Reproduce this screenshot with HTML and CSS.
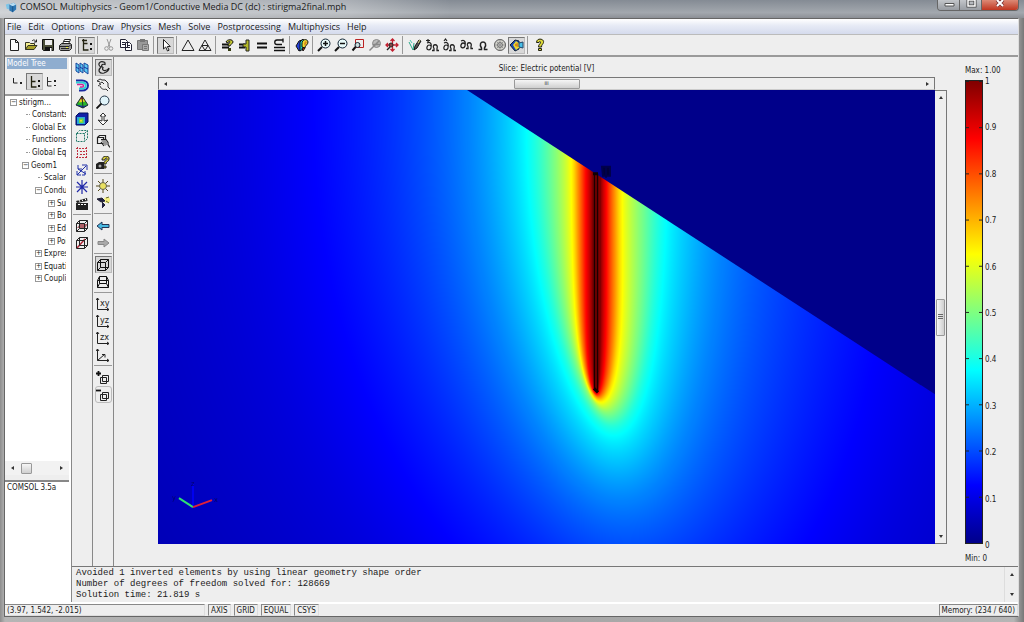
FILE: index.html
```html
<!DOCTYPE html>
<html lang="en">
<head>
  <meta charset="UTF-8">
  <meta name="viewport" content="width=device-width,initial-scale=1.0">
  <title>COMSOL Multiphysics</title>
  <link rel="stylesheet" href="styles.css">
</head>
<body>

<div class="window">
  <header class="titlebar">
    <svg class="app-icon" viewBox="0 0 14 14"><path d="M1 4l4-1v7l-3-1z" fill="#7cc4e8"/><path d="M5 4l5-2 3 2v6l-4 3-4-2z" fill="#2f78b4"/><path d="M5 4l4 2 4-2-3-2z" fill="#b6dcf2"/><path d="M9 6v7" stroke="#164f86"/></svg>
    <span class="title">COMSOL Multiphysics - Geom1/Conductive Media DC (dc) : stirigma2final.mph</span>
    <div class="window-buttons">
      <button aria-label="Minimize"><svg viewBox="0 0 20 10"><path d="M6 3.500h9v2.500H6z" fill="#fff" stroke="#555"/></svg></button>
      <button aria-label="Maximize"><svg viewBox="0 0 20 10"><path d="M7 0h7v6H7z" fill="none" stroke="#444" stroke-width="3"/><path d="M7 0h7v6H7z" fill="none" stroke="#fff" stroke-width="1.500"/></svg></button>
      <button class="close" aria-label="Close"><svg viewBox="0 0 20 10"><path d="M7 0l6 6M13 0L7 6" stroke="#733" stroke-width="3.500"/><path d="M7 0l6 6M13 0L7 6" stroke="#fff" stroke-width="2"/></svg></button>
    </div>
  </header>

  <div class="client">
    <nav class="menubar">
      <button>File</button><button>Edit</button><button>Options</button><button>Draw</button><button>Physics</button><button>Mesh</button><button>Solve</button><button>Postprocessing</button><button>Multiphysics</button><button>Help</button>
    </nav>

    <div class="toolbar">
      <button aria-label="New"><svg viewBox="0 0 14 14"><path d="M3.500 1.500h5l3 3v8h-8zM8.500 1.500v3h3" fill="#fff" stroke="#222"/></svg></button>
      <button aria-label="Open"><svg viewBox="0 0 14 14"><path d="M1.500 11.500v-7h4l1 1h4v2" fill="#f4ee90" stroke="#332"/><path d="M1.500 11.500l2.500-4h9l-3 4z" fill="#a7a028" stroke="#332"/><path d="M8 3c2-2 3-1 4 1M12.500 1.500V4H10" fill="none" stroke="#222"/></svg></button>
      <button aria-label="Save"><svg viewBox="0 0 14 14"><path d="M1.500 1.500h11v11h-10l-1-1z" fill="#4c5038" stroke="#111"/><path d="M4 2h7v5H4z" fill="#eee"/><path d="M4 9h7v4H4z" fill="#111"/><path d="M9 10h1.500v3H9z" fill="#fff"/></svg></button>
      <button aria-label="Print"><svg viewBox="0 0 14 14"><path d="M4.500 6l2-4.500h6L10.500 6" fill="#fff" stroke="#222"/><path d="M1.500 7.500l2-2h9l1 1v4l-2 2h-9l-1-1z" fill="#999" stroke="#222"/><path d="M2 8.500h9l2-2M3 10.500h8M6 3.500h5" fill="none" stroke="#222"/><path d="M8 9h2v1H8z" fill="#ee3"/></svg></button>
      <i class="sep"></i>
      <button class="pressed" aria-label="Model Tree"><svg viewBox="0 0 14 14"><path d="M3.500 1v11h5M3.500 5.500h4M2 2.500h5" fill="none" stroke="#221" stroke-width="1.300"/><path d="M10 5h2v2h-2zM10 10h2v2h-2z" fill="#111"/></svg></button>
      <i class="sep"></i>
      <button aria-label="Cut"><svg viewBox="0 0 14 14"><path d="M5 1l3 8M9 1L6 9" stroke="#999" fill="none"/><circle cx="4.500" cy="10.500" r="1.800" fill="none" stroke="#999"/><circle cx="9" cy="10.500" r="1.800" fill="none" stroke="#999"/></svg></button>
      <button aria-label="Copy"><svg viewBox="0 0 14 14"><path d="M1.500 1.500h5l2 2v6h-7zM6.500 4.500h4l2 2v6h-6z" fill="#fff" stroke="#223"/><path d="M3 4.500h3M3 6.500h3M8 7.500h3M8 9.500h3" stroke="#223"/></svg></button>
      <button aria-label="Paste"><svg viewBox="0 0 14 14"><path d="M1.500 2.500h10v9h-10z" fill="#999" stroke="#777"/><path d="M4 1h5v3H4z" fill="#777"/><path d="M6.500 6.500h6v6h-6z" fill="#aaa" stroke="#777"/><path d="M8 8.500h3M8 10.500h3" stroke="#777"/></svg></button>
      <i class="sep wide"></i>
      <button class="pressed" aria-label="Select"><svg viewBox="0 0 14 14"><path d="M4.500 1.500v9.500l2.200-2 1.800 4 1.600-.8-1.800-3.700h3z" fill="#fff" stroke="#222"/></svg></button>
      <i class="sep"></i>
      <button aria-label="Initialize Mesh"><svg viewBox="0 0 14 14"><path d="M7 2l6 10.500H1z" fill="none" stroke="#222"/></svg></button>
      <button aria-label="Refine Mesh"><svg viewBox="0 0 14 14"><path d="M7 2l6 10.500H1zM4 7.500h6l-3 5z" fill="none" stroke="#222"/></svg></button>
      <i class="sep wide"></i>
      <button aria-label="Get Initial Value"><svg viewBox="0 0 14 14"><path d="M1 6.500h7M1 9.500h7" stroke="#111" stroke-width="1.800"/><path d="M5 4c1-3 7-3 7 0 0 2-3 2-3 4H7c0-3 2-3 2-4S7 3 7 5z" fill="#c9cc32" stroke="#111"/><path d="M7 10h3v3H7z" fill="#333a10"/></svg></button>
      <button aria-label="Solver Parameters"><svg viewBox="0 0 14 14"><path d="M1 6.500h6M1 9.500h6" stroke="#111" stroke-width="1.800"/><path d="M8 2h3v11H8V9H5V6h3z" fill="#b6ba28" stroke="#222"/></svg></button>
      <button aria-label="Solve"><svg viewBox="0 0 14 14"><path d="M2 5.500h10M2 9.500h10" stroke="#111" stroke-width="2"/></svg></button>
      <button aria-label="Restart"><svg viewBox="0 0 14 14"><path d="M2 9.500h11M2 12.500h11" stroke="#111" stroke-width="1.300"/><path d="M11 2H5C2 2 2 6.500 5 6.500h5M11 4.500V.500" fill="none" stroke="#111" stroke-width="1.300"/></svg></button>
      <i class="sep wide"></i>
      <button aria-label="Plot Parameters"><svg viewBox="0 0 14 14"><path d="M1 8l3-5 3-1-1 10-2 1z" fill="#2440d8" stroke="#111"/><path d="M5 4l3-3 2 3-2 7-3 2z" fill="#28d8c8" stroke="#111"/><path d="M7 6c0-6 6-5 6-2s-3 3-3 6l-3-1z" fill="#ece030" stroke="#111"/><path d="M10 3l2 1-2 4-1-2z" fill="#d88820"/><path d="M7 10h3l-2 3z" fill="#d93818" stroke="#111"/></svg></button>
      <i class="sep"></i>
      <button aria-label="Zoom In"><svg viewBox="0 0 14 14"><circle cx="8.500" cy="5.500" r="4.500" fill="#e8fafa" stroke="#123"/><path d="M5 9l-4 4" stroke="#111" stroke-width="2"/><path d="M6 5.500h5M8.500 3v5" stroke="#111" stroke-width="1.500"/></svg></button>
      <button aria-label="Zoom Out"><svg viewBox="0 0 14 14"><circle cx="8.500" cy="5.500" r="4.500" fill="#e8fafa" stroke="#123"/><path d="M5 9l-4 4" stroke="#111" stroke-width="2"/><path d="M6 5.500h5" stroke="#111" stroke-width="1.500"/></svg></button>
      <button aria-label="Zoom Window"><svg viewBox="0 0 14 14"><path d="M4.500 1.500h8v8h-8z" fill="none" stroke="#b22"/><circle cx="6.500" cy="7" r="2.500" fill="#cdd" stroke="#123"/><path d="M4.500 9l-3 3.500" stroke="#111" stroke-width="2"/></svg></button>
      <button aria-label="Zoom Selected"><svg viewBox="0 0 14 14"><circle cx="8.500" cy="5.500" r="4" fill="#bbb" stroke="#888"/><path d="M1.500 12.500l4-4L11 3M5 6.500h7" stroke="#888" stroke-width="1.500"/></svg></button>
      <button aria-label="Zoom Extents"><svg viewBox="0 0 14 14"><path d="M7.500 1v12M1 7h12M5.500 3l2-2 2 2M5.500 11l2 2 2-2M3 5L1 7l2 2M11 5l2 2-2 2" fill="none" stroke="#c22030" stroke-width="1.300"/><circle cx="6" cy="7" r="2" fill="#844" stroke="#222"/><path d="M5 9l-3 3" stroke="#222" stroke-width="1.500"/></svg></button>
      <i class="sep wide"></i>
      <button aria-label="Draw Mode"><svg viewBox="0 0 14 14"><path d="M1 4l4 8 1-7" fill="none" stroke="#28a888"/><path d="M2 2l2 3" stroke="#4cc8b0"/><path d="M6 12l1-4 4-6 2 1-4 7z" fill="#555" stroke="#111"/><path d="M10 5l2-3" stroke="#dfdf80"/></svg></button>
      <button aria-label="Point Mode"><svg viewBox="0 0 14 14"><path d="M7 12.500h2v-2c-3-5 5-5 3 0v2h2" fill="none" stroke="#222" stroke-width="1.300"/><path d="M2 5c4-2 5 2 4 5s-5 2-4-1 3-2 4-1M1 2.500h4M3 1v3" fill="none" stroke="#222" stroke-width="1.200"/></svg></button>
      <button aria-label="Edge Mode"><svg viewBox="0 0 14 14"><path d="M7 12.500h2v-2c-3-5 5-5 3 0v2h2" fill="none" stroke="#222" stroke-width="1.300"/><path d="M2 5c4-2 5 2 4 5s-5 2-4-1 3-2 4-1M2 3l1.500-2L5 3" fill="none" stroke="#222" stroke-width="1.200"/></svg></button>
      <button aria-label="Boundary Mode"><svg viewBox="0 0 14 14"><path d="M7 10.500h2v-2c-3-5 5-5 3 0v2h2" fill="none" stroke="#222" stroke-width="1.300"/><path d="M2 3c4-2 5 2 4 5s-5 2-4-1 3-2 4-1" fill="none" stroke="#222" stroke-width="1.300"/></svg></button>
      <button aria-label="Subdomain Mode"><svg viewBox="0 0 14 14"><path d="M2.500 11.500h3V10c-5-8 8-8 3 0v1.500h3" fill="none" stroke="#222" stroke-width="1.500"/></svg></button>
      <button aria-label="Mesh Mode"><svg viewBox="0 0 14 14"><circle cx="7" cy="7" r="5.500" fill="#d4d4cc" stroke="#555"/><path d="M3 3l8 8M11 3l-8 8M7 1.500v11M1.500 7h11" stroke="#999"/><circle cx="7" cy="7" r="2.500" fill="none" stroke="#777"/></svg></button>
      <button class="pressed" aria-label="Postprocessing Mode"><svg viewBox="0 0 14 14"><path d="M0 7l5-5 4 1v8l-4 2z" fill="#1848b8" stroke="#123"/><path d="M3 7l3-4 4 3v3l-4 3z" fill="#e8d830"/><path d="M5 6l3-1v4l-3-1z" fill="#d88820"/><path d="M9 5l4-1v6l-4-1z" fill="#48c0e8" stroke="#246"/></svg></button>
      <i class="sep wide"></i>
      <button aria-label="Help"><svg viewBox="0 0 14 14"><path d="M3.500 4.500c0-5 8-4 7 0-.5 2-2 2-2 4.500h-3c0-3 2-3 2-4.500s-1.500-1-1.500 0z" fill="#dcd838" stroke="#221"/><path d="M5.500 10.500h3v2h-3z" fill="#dcd838" stroke="#221"/></svg></button>
    </div>

    <main class="workspace">
      <aside class="sidebar">
        <h2>Model Tree</h2>
        <div class="tree-modes">
          <button aria-label="Overview"><svg viewBox="0 0 14 14"><path d="M2.500 3v5h4" fill="none" stroke="#222"/><path d="M9 7h2v2H9z" fill="#222"/></svg></button>
          <button class="pressed" aria-label="Detail"><svg viewBox="0 0 14 14"><path d="M3.500 1v11h5M3.500 6.500h4" fill="none" stroke="#221" stroke-width="1.300"/><path d="M10 5h2v2h-2zM10 10h2v2h-2z" fill="#111"/></svg></button>
          <button aria-label="Inspect"><svg viewBox="0 0 14 14"><path d="M2.500 2v9h4M2.500 6.500h4" fill="none" stroke="#333"/><path d="M9 5h2v2H9zM9 10h2v1H9z" fill="#222"/></svg></button>
        </div>
        <div class="tree-pane">
          <ul class="tree">
            <li><span class="box">−</span>stirigm...</li>
            <li class="leaf">Constants</li>
            <li class="leaf">Global Expressions</li>
            <li class="leaf">Functions</li>
            <li class="leaf">Global Equations</li>
            <li class="l1"><span class="box">−</span>Geom1</li>
            <li class="leaf deep">Scalar Variables</li>
            <li class="l2"><span class="box">−</span>Conductive</li>
            <li class="l3"><span class="box">+</span>Subdomain</li>
            <li class="l3"><span class="box">+</span>Boundary</li>
            <li class="l3"><span class="box">+</span>Edge</li>
            <li class="l3"><span class="box">+</span>Point</li>
            <li class="l2"><span class="box">+</span>Expressions</li>
            <li class="l2"><span class="box">+</span>Equation</li>
            <li class="l2"><span class="box">+</span>Coupling</li>
          </ul>
        </div>
        <div class="tree-scroll"><span class="arrow left"></span><span class="thumb"></span><span class="arrow right"></span></div>
        <div class="info">COMSOL 3.5a</div>
      </aside>

      <div class="content">
        <div class="stage">
          <div class="tools">
            <button aria-label="Slice"><svg viewBox="0 0 14 14"><path d="M1 2l3 2v8l-3-2zM5 2l3 2v8l-3-2zM9 2l4 2v9l-4-3z" fill="#5cc8f0" stroke="#1848a0"/><path d="M1 6l3 2M5 6l3 2M9 6l4 2" stroke="#1030a0"/></svg></button>
            <button aria-label="Isosurface"><svg viewBox="0 0 14 14"><path d="M1 2.500h6c8 0 8 10 0 10H4" fill="none" stroke="#1828a0" stroke-width="2"/><path d="M1 4.500h6c5 0 5 6 0 6H4" fill="none" stroke="#28d0d8" stroke-width="2"/><path d="M2 6.500h5c2 0 2 2.500 0 2.500H5" fill="none" stroke="#d02898" stroke-width="1.500"/></svg></button>
            <button aria-label="Subdomain"><svg viewBox="0 0 14 14"><path d="M7 1l6 9-5 3-7-3z" fill="#28b828"/><path d="M7 1l2 3-4 1z" fill="#d02010"/><path d="M5 4.500l4-.5 1.500 2.500L4 7.500z" fill="#f0d020"/><path d="M1.500 9.500L8 11l5-1-5 3-7-3z" fill="#1830b8"/><path d="M7 1l6 9-5 3-7-3zM7 1l1 12" fill="none" stroke="#233"/></svg></button>
            <button aria-label="Boundary"><svg viewBox="0 0 14 14"><path d="M1 4l3-3h9v9l-3 3H1z" fill="#1020a8" stroke="#001060"/><path d="M2 5h8v7H2z" fill="#28a8d8"/><path d="M4 6.500h4.500V11H4z" fill="#70d840"/><path d="M5 8h2v1.500H5z" fill="#f0e030"/></svg></button>
            <button aria-label="Edge"><svg viewBox="0 0 14 14"><path d="M1.500 4.500h8v8h-8zM1.500 4.500l3-3h8v8l-3 3M9.500 4.500l3-3" fill="none" stroke="#207868" stroke-dasharray="2 1"/></svg></button>
            <button aria-label="Arrow"><svg viewBox="0 0 14 14"><path d="M1 2.500h12M1 11.500h12M2.500 1v12M11.500 1v12M5 5.500h5M5 8.500h5" stroke="#c03040" stroke-dasharray="2 1"/></svg></button>
            <button aria-label="Principal"><svg viewBox="0 0 14 14"><path d="M2 12l9-9M3 6l8 5M7 2h5v5M2 8v4h4M3 2v4h4M10 8v4H7" fill="none" stroke="#2030a8"/></svg></button>
            <button aria-label="Streamline"><svg viewBox="0 0 14 14"><path d="M7 0v14M1 7h12M2 2l10 10M12 2L2 12" stroke="#2028a8" stroke-width="1.200"/></svg></button>
            <button aria-label="Animate"><svg viewBox="0 0 14 14"><path d="M1 6h12v7H1z" fill="#222"/><path d="M1 4l11-3 .5 3L2 6z" fill="#222"/><path d="M4 3l1 2M7 2.500l1 2M10 1.500l1 2M3 7.500h9" stroke="#fff" stroke-dasharray="2 1"/></svg></button>
            <i class="sep"></i>
            <button aria-label="Slice Cube"><svg viewBox="0 0 14 14"><path d="M2 9l3-4h8l-3 4z" fill="#b06068"/><path d="M1.500 4.500h8v8h-8zM1.500 4.500l3-3h8v8l-3 3M9.500 4.500l3-3M4.500 1.500v8h8M1.500 12.500l3-3" fill="none" stroke="#222"/></svg></button>
            <button aria-label="Line Cube"><svg viewBox="0 0 14 14"><path d="M2 12l8-9" stroke="#b02838" stroke-width="1.500"/><path d="M1.500 4.500h8v8h-8zM1.500 4.500l3-3h8v8l-3 3M9.500 4.500l3-3M4.500 1.500v8h8" fill="none" stroke="#222"/></svg></button>
          </div>
          <div class="tools">
            <button class="pressed" aria-label="Orbit"><svg viewBox="0 0 14 14"><path d="M9 1.500C3 -1 1 4 5 6c-4 4-1 7 3 6 3-1 5-3 5-5M9 1.500v2c-4-1-4 2-2 3-2 4 4 4 6 .5" fill="none" stroke="#222" stroke-width="1.200"/></svg></button>
            <button aria-label="Pan"><svg viewBox="0 0 14 14"><path d="M1 3l3-2 2 1h3l3 3v4l2 2M1 3l3 1M3 6l3-2 2 2M2 8l3-2M4 8c1 3 4 4 6 3l2 2" fill="none" stroke="#333"/></svg></button>
            <button aria-label="Zoom"><svg viewBox="0 0 14 14"><circle cx="8.500" cy="5.500" r="4.500" fill="#e0f4fa" stroke="#234"/><path d="M5.500 8.500l-5 5" stroke="#111" stroke-width="1.800"/></svg></button>
            <button aria-label="Dolly"><svg viewBox="0 0 14 14"><path d="M6 4v5l-4-1 5 5 5-5-4 1V4h2L7 1 4 4z" fill="#fff" stroke="#333"/></svg></button>
            <i class="sep"></i>
            <button aria-label="Move Light"><svg viewBox="0 0 14 14"><path d="M1.500 3.500h6v6h-6zM1.500 3.500l2-2h6v6M5 5.500h5l2 3v2l2 3M5 8l3 4" fill="none" stroke="#222" stroke-width="1.200"/><path d="M5 6h5l2 4-3 2z" fill="#999"/></svg></button>
            <i class="sep"></i>
            <button aria-label="Camera Help"><svg viewBox="0 0 14 14"><path d="M0 8l3-2h5v7H0z" fill="#222"/><path d="M6 4c0-5 8-5 7-1 0 3-3 2-3 5H8c0-4 3-3 3-5s-2-1-2 1z" fill="#d8d038" stroke="#222"/><path d="M8 10h2v2H8z" fill="#d8d038" stroke="#222"/><circle cx="4" cy="10" r="1.500" fill="#aaa"/></svg></button>
            <i class="sep wide"></i>
            <button aria-label="Scene Light"><svg viewBox="0 0 14 14"><path d="M7 0v14M0 7h14M2 2l10 10M12 2L2 12" stroke="#554818"/><circle cx="7" cy="7" r="3.500" fill="#e8e060" stroke="#665"/></svg></button>
            <button aria-label="Headlight"><svg viewBox="0 0 14 14"><circle cx="11" cy="4" r="3" fill="#f4f080"/><path d="M1 3l5-1 3 3-4 1zM6 6l3 3-3 3" fill="#224" stroke="#223"/><path d="M10 2l3-1M10 5l3 2" stroke="#663"/></svg></button>
            <i class="sep wide"></i>
            <button aria-label="Back"><svg viewBox="0 0 14 14"><path d="M1 7l5-4v2.500h7v3H6V11z" fill="#48b8e0" stroke="#235"/></svg></button>
            <button aria-label="Forward"><svg viewBox="0 0 14 14"><path d="M13 7L8 3v2.500H2v3h6V11z" fill="#aaa" stroke="#888"/></svg></button>
            <i class="sep"></i>
            <button class="pressed" aria-label="Perspective"><svg viewBox="0 0 14 14"><path d="M1.500 4.500h8v8h-8zM4.500 1.500h8v8h-8zM1.500 4.500l3-3M9.500 4.500l3-3M9.500 12.500l3-3M1.500 12.500l3-3" fill="none" stroke="#111"/></svg></button>
            <button aria-label="Orthographic"><svg viewBox="0 0 14 14"><path d="M3.500 1.500h7v7h-7zM1.500 5.500h11v7h-11zM1.500 5.500l2-4M12.500 5.500l-2-4M3.500 8.500l-2 4M10.500 8.500l2 4" fill="none" stroke="#111"/></svg></button>
            <i class="sep"></i>
            <button class="view" aria-label="XY view"><svg viewBox="0 0 14 14"><path d="M1.500 1v11.500H13M0 3l1.500-2L3 3M11 11l2 1.500L11 14" fill="none" stroke="#222"/><text x="4" y="9">xy</text></svg></button>
            <button class="view" aria-label="YZ view"><svg viewBox="0 0 14 14"><path d="M1.500 1v11.500H13M0 3l1.500-2L3 3M11 11l2 1.500L11 14" fill="none" stroke="#222"/><text x="4" y="9">yz</text></svg></button>
            <button class="view" aria-label="ZX view"><svg viewBox="0 0 14 14"><path d="M1.500 1v11.500H13M0 3l1.500-2L3 3M11 11l2 1.500L11 14" fill="none" stroke="#222"/><text x="4" y="9">zx</text></svg></button>
            <button aria-label="3D view"><svg viewBox="0 0 14 14"><path d="M1.500 1v11.500H13M0 3l1.500-2L3 3M11 11l2 1.500L11 14M1.500 12.500l7-6M6 6.500h3v3" fill="none" stroke="#222"/></svg></button>
            <i class="sep wide"></i>
            <button aria-label="Increase"><svg viewBox="0 0 14 14"><path d="M4.500 6.500h6v6h-6zM6.500 4.500h6v6h-6z" fill="none" stroke="#222"/><path d="M0 2.500h5M2.500 0v5" stroke="#111" stroke-width="1.800"/></svg></button>
            <button class="hover" aria-label="Decrease"><svg viewBox="0 0 14 14"><path d="M4.500 6.500h6v6h-6zM6.500 4.500h6v6h-6z" fill="none" stroke="#222"/><path d="M0 2.500h5" stroke="#111" stroke-width="1.800"/></svg></button>
          </div>

          <section class="plot">
            <h1>Slice: Electric potential [V]</h1>
            <div class="hscroll"><span class="arrow left"></span><span class="thumb">III</span><span class="arrow right"></span></div>
            <div class="view-area">
              <canvas id="field" width="777" height="455"></canvas>
              <svg class="overlay" viewBox="0 0 777 455" preserveAspectRatio="none">
                <path d="M309 0L777 305V0z" fill="#00008a"/>
                <path d="M436.500 84v216M439.500 84v218" stroke="#1a0000" stroke-width="1.500"/>
                <path d="M435 84h5M436 299l4 4" stroke="#100000" stroke-width="3"/>
                <path d="M444 77h8v9h-7zM448 76v12" fill="#00003c" stroke="#00004c" stroke-width="2"/>
                <path d="M35 418V395" stroke="#0000f0" stroke-width="2"/>
                <path d="M35 418l-14-9" stroke="#30e070" stroke-width="2"/>
                <path d="M35 418l19-7" stroke="#e02038" stroke-width="2"/>
                <g class="axis-names"><text x="33" y="397">z</text><text x="14" y="411">y</text><text x="56" y="413">x</text></g>
              </svg>
            </div>
            <div class="vscroll"><span class="arrow up"></span><span class="thumb"></span><span class="arrow down"></span></div>
            <div class="legend">
              <span class="max">Max: 1.00</span>
              <div class="bar"></div>
              <ol>
                <li>1</li><li>0.9</li><li>0.8</li><li>0.7</li><li>0.6</li><li>0.5</li><li>0.4</li><li>0.3</li><li>0.2</li><li>0.1</li><li>0</li>
              </ol>
              <span class="min">Min: 0</span>
            </div>
          </section>
        </div>

        <div class="log">
          <pre>Avoided 1 inverted elements by using linear geometry shape order
Number of degrees of freedom solved for: 128669
Solution time: 21.819 s</pre>
          <div class="log-scroll"><span class="arrow up"></span><span class="arrow down"></span></div>
        </div>
      </div>
    </main>

    <footer class="statusbar">
      <span class="coords">(3.97, 1.542, -2.015)</span>
      <span>AXIS</span><span>GRID</span><span>EQUAL</span><span>CSYS</span>
      <span class="memory">Memory: (234 / 640)</span>
    </footer>
  </div>
</div>

<script src="field.js"></script>
</body>
</html>
```
FILE: styles.css
```css
* { box-sizing: border-box; }
body {
  margin: 0;
  font-family: "DejaVu Sans Condensed", "Noto Sans", sans-serif;
  font-size: 8px;
  color: #1a1a1a;
}
button {
  margin: 0; padding: 0;
  border: 0; background: none;
  font: inherit; color: inherit;
}
svg { display: block; }

.window {
  height: 100vh;
  display: flex; flex-direction: column;
  padding: 0 5px 5px 4px;
  background: linear-gradient(90deg, #8d8d8d, #b5b5b5 5px, #a5a5a5 50%, #b5b5b5 99%, #777);
}

/* title bar */
.titlebar {
  height: 18px; margin: 0 -5px 0 -4px;
  display: flex; align-items: flex-start;
  background: linear-gradient(90deg, rgba(255,255,255,0.5), rgba(255,255,255,0.3) 34%, transparent 44%), linear-gradient(#848b94, #a3a8ae 70%, #8c9096);
}
.app-icon { width: 12px; height: 12px; margin: 1px 3px 0 5px; }
.title {
  flex: 1;
  font-family: "Open Sans", sans-serif;
  font-size: 9px; line-height: 14px;
}
.window-buttons {
  display: flex; margin-right: 5px;
  border: 1px solid #666; border-top: 0;
  border-radius: 0 0 4px 4px; overflow: hidden;
}
.window-buttons button {
  width: 22px; height: 10px;
  border-right: 1px solid #666;
  background: linear-gradient(#c3c6ca, #989ca2);
}
.window-buttons svg { width: 20px; height: 10px; margin: 0 auto; }
.window-buttons .close { width: 36px; border: 0; background: linear-gradient(#dd8a76, #c03620); }

.client {
  flex: 1; min-height: 0;
  display: flex; flex-direction: column;
  border: 1px solid #666; border-right-color: #ddd;
  background: #eee;
}

/* menus */
.menubar {
  height: 16px;
  display: flex; align-items: center; gap: 7px;
  padding-left: 2px;
  background: linear-gradient(#fff, #e6eaf5 45%, #d5dbed);
  border-bottom: 1px solid #bbb;
  font-family: "Open Sans", sans-serif;
  font-size: 9px;
}

/* icon buttons */
.toolbar {
  height: 22px;
  display: flex; align-items: center;
  border-bottom: 2px solid #9a9a9a;
}
.toolbar button, .tools button, .tree-modes button {
  width: 17px; height: 17px;
  display: flex; align-items: center; justify-content: center;
}
.toolbar svg, .tools svg, .tree-modes svg { width: 14px; height: 14px; flex: none; }
.toolbar .sep { width: 5px; height: 18px; background: linear-gradient(90deg, transparent 2px, #999 2px, #999 3px, transparent 3px); }
.toolbar .sep.wide { width: 6px; }
.toolbar .pressed, .tools .pressed, .tree-modes .pressed {
  background: #d8d8d8;
  border: 1px solid #777; border-right-color: #bbb; border-bottom-color: #bbb;
}

.workspace { flex: 1; min-height: 0; display: flex; }

/* model tree */
.sidebar {
  width: 66px;
  display: flex; flex-direction: column;
  border-right: 2px solid #fff;
  white-space: nowrap; overflow: hidden;
}
.sidebar h2 {
  margin: 1px 2px 0; height: 11px;
  font-size: 8px; font-weight: normal; line-height: 11px;
  color: #fff; background: #8fadcf;
}
.tree-modes { display: flex; padding: 4px 4px; height: 25px; }
.tree-pane {
  flex: 1; min-height: 0;
  padding-right: 3px;
  background: #fff; border-top: 2px solid #999;
}
.tree {
  height: 189px;
  display: flex; flex-direction: column; justify-content: space-between;
  margin: 0; padding: 0 0 0 5px;
  list-style: none; overflow: hidden;
}
.tree li {
  height: 12px; flex: none;
  display: flex; align-items: center; gap: 2px;
}
.tree .box {
  width: 7px; height: 7px; flex: none;
  border: 1px solid #999;
  font-size: 7px; line-height: 5px; text-align: center;
}
.tree .l1 { padding-left: 12px; }
.tree .l2 { padding-left: 25px; }
.tree .l3 { padding-left: 38px; }
.tree .leaf { padding-left: 16px; }
.tree .leaf::before { content: ""; width: 4px; flex: none; border-top: 1px dotted #999; }
.tree .deep { padding-left: 28px; }
.tree-scroll {
  height: 14px; padding: 0 6px;
  display: flex; align-items: center;
  background: #f2f2f2;
}
.tree-scroll .thumb { width: 11px; height: 11px; margin: 0 auto 0 7px; }
.info {
  height: 122px; margin-top: 5px; padding: 1px 2px;
  background: #fff; border-top: 2px solid #888;
}

/* scroll bar parts */
.arrow { width: 0; height: 0; border: 2px solid transparent; }
.arrow.left { border-right: 3px solid #333; border-left: 0; }
.arrow.right { border-left: 3px solid #333; border-right: 0; }
.arrow.up { border-bottom: 3px solid #333; border-top: 0; }
.arrow.down { border-top: 3px solid #333; border-bottom: 0; }
.thumb {
  border: 1px solid #999; border-radius: 1px;
  background: linear-gradient(#f6f6f6, #cfcfcf);
  font-size: 5px; text-align: center;
}

.content {
  flex: 1; min-width: 0;
  display: flex; flex-direction: column;
  border-left: 1px solid #888;
}
.stage { flex: 1; min-height: 0; display: flex; }
.tools {
  width: 21px; padding: 2px 1px;
  display: flex; flex-direction: column; align-items: center;
  border-right: 1px solid #888;
}
.tools button { flex: none; }
.tools .sep { width: 100%; height: 5px; background: linear-gradient(transparent 2px, #999 2px, #999 3px, transparent 3px); }
.tools .sep.wide { height: 6px; }
.tools .hover { border: 1px solid #bbb; border-radius: 3px; }
.view text { font-family: "DejaVu Sans Condensed", sans-serif; font-size: 9px; fill: #222; }

/* plot */
.plot {
  flex: 1; min-width: 0;
  display: grid;
  grid-template-columns: 1fr 12px 71px;
  grid-template-rows: 20px 13px 1fr;
  padding: 0 0 22px 44px;
}
.plot h1 {
  margin: 0; padding-top: 7px;
  font-size: 8px; font-weight: normal; line-height: 10px; text-align: center;
}
.hscroll {
  grid-area: 2 / 1;
  display: flex; align-items: center; justify-content: space-between;
  padding: 0 5px;
  border: 1px solid #777; border-bottom-color: #ccc;
}
.hscroll .thumb { width: 66px; height: 10px; line-height: 7px; }
.view-area { grid-area: 3 / 1; position: relative; min-height: 0; }
.view-area canvas, .overlay { position: absolute; left: 0; top: 0; width: 100%; height: 100%; }
.axis-names { font-size: 7px; fill: #000060; }
.vscroll {
  grid-area: 3 / 2;
  display: flex; flex-direction: column; align-items: center; justify-content: space-between;
  padding: 5px 0;
  border: 1px solid #777; border-left: 0;
}
.vscroll .thumb {
  width: 9px; height: 37px;
  background: repeating-linear-gradient(#666 0 1px, transparent 1px 2px) center / 5px 6px no-repeat, linear-gradient(90deg, #f6f6f6, #cfcfcf);
}
.legend {
  grid-area: 1 / 3 / 4 / 4;
  display: grid;
  grid-template-columns: 18px 1fr;
  grid-template-rows: 23px 1fr 0;
  padding-left: 18px;
}
.legend .max { grid-area: 1 / 1 / 2 / 3; padding-top: 9px; line-height: 10px; }
.legend .min { grid-area: 3 / 1 / 4 / 3; padding-top: 10px; line-height: 10px; }
.bar {
  border: 1px solid #222;
  background:
    linear-gradient(#222 1px, transparent 1px) left top / 3px 10% repeat-y,
    linear-gradient(#222 1px, transparent 1px) right top / 3px 10% repeat-y,
    linear-gradient(#800000, #f00 12.5%, #ff0 37.5%, #0ff 62.5%, #00f 87.5%, #00008a);
}
.legend ol {
  margin: -3px 0 -7px; padding: 0 0 0 2px;
  display: flex; flex-direction: column; justify-content: space-between;
  list-style: none; line-height: 10px;
}

/* message log */
.log {
  height: 36px;
  display: flex; justify-content: space-between;
  border-top: 1px solid #777;
}
.log pre {
  margin: 0; padding: 1px 0 0 4px;
  font-family: "Liberation Mono", monospace;
  font-size: 9px; line-height: 11px;
}
.log-scroll {
  width: 14px; padding: 6px 0;
  display: flex; flex-direction: column; align-items: center; justify-content: space-between;
  border-left: 1px solid #ddd;
}

.statusbar {
  height: 14px;
  display: flex; align-items: center; gap: 3px;
  border-top: 2px solid #fff;
}
.statusbar span {
  height: 12px; padding: 0 2px;
  line-height: 11px;
  border: 1px solid #888; border-right-color: #ddd; border-bottom-color: #ddd;
}
.statusbar .coords { width: 200px; border-left: 0; }
.statusbar .memory { margin-left: auto; }
```
FILE: field.js
```js
// Equipotential curves around the electrode:
// level, left width, right width, depth, x of lowest point, exponent
const contours = [
  [0,     1200, 1300, 1300, 640, 2],
  [0.05,  480,  480,  720,  490, 2],
  [0.125, 275,  300,  520,  482, 2],
  [0.2,   170,  175,  425,  469, 2],
  [0.25,  128,  130,  380,  462, 2],
  [0.375, 69,   70,   312,  455, 2],
  [0.5,   42,   44,   293,  449, 3],
  [0.625, 25,   25,   282,  442, 5],
  [0.75,  18,   17,   277,  440, 6],
  [0.875, 11,   10,   274,  438, 8],
  [1,     4,    4,    270,  438, 9]
];
const axisX = 438;
const topY = 30;

function contourAt(v) {
  let i = 1;
  while (i < contours.length - 1 && contours[i][0] < v) i++;
  const a = contours[i - 1], b = contours[i];
  const t = (v - a[0]) / (b[0] - a[0]);
  return a.map((n, k) => k ? n * Math.pow(b[k] / n, t) : v);
}

// precomputed table of curves
const steps = 1024;
const raw = [];
for (let i = 0; i <= steps; i++) raw.push(contourAt(i / steps));

// average neighbouring curves so the colours blend without bands
const table = raw.map((row, i) => {
  const r = Math.min(50, i, steps - i);
  return row.map((_, k) => {
    let sum = 0;
    for (let j = i - r; j <= i + r; j++) sum += raw[j][k];
    return sum / (2 * r + 1);
  });
});

function inside(x, y, c) {
  const t = Math.max(0, y - topY) / c[3];
  if (t >= 1) return false;
  const dx = x - axisX - (c[4] - axisX) * t * t;
  const w = dx < 0 ? c[1] : c[2];
  return (dx / w) * (dx / w) + Math.pow(t, c[5]) < 1;
}

function potential(x, y) {
  let lo = 0, hi = steps;
  while (hi - lo > 1) {
    const mid = (lo + hi) >> 1;
    if (inside(x, y, table[mid])) lo = mid; else hi = mid;
  }
  return lo / steps;
}

function ramp(n) {
  return 255 * Math.min(1, Math.max(0, n));
}

const canvas = document.getElementById('field');
const ctx = canvas.getContext('2d');
const img = ctx.createImageData(canvas.width, canvas.height);
let p = 0;
for (let y = 0; y < canvas.height; y++) {
  for (let x = 0; x < canvas.width; x++) {
    const v = potential(x, y) * 4;
    img.data[p++] = ramp(Math.min(v - 1.5, 4.5 - v));
    img.data[p++] = ramp(Math.min(v - 0.5, 3.5 - v));
    img.data[p++] = ramp(Math.min(v + 0.5, 2.5 - v));
    img.data[p++] = 255;
  }
}
ctx.putImageData(img, 0, 0);
```
